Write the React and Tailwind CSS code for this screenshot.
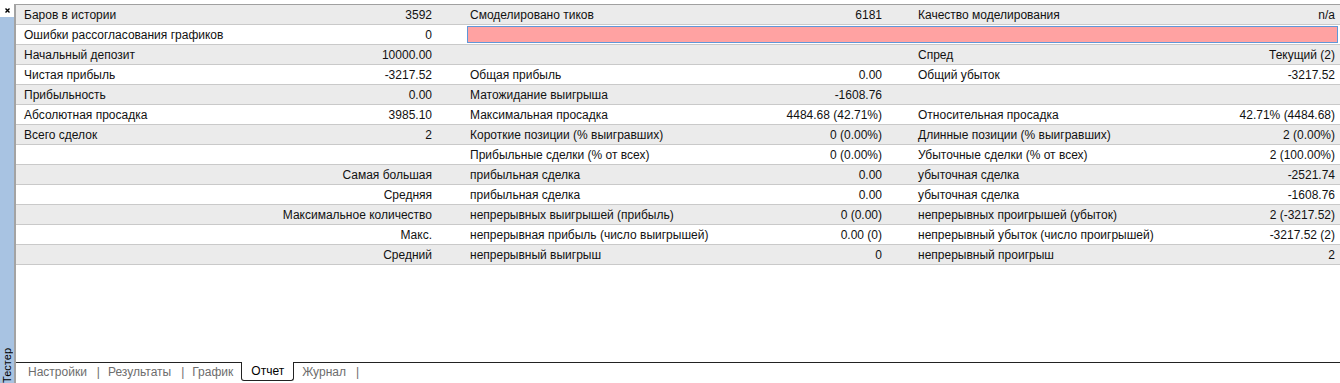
import React from 'react';

const rows = [
  { cells: ['Баров в истории', '3592', 'Смоделировано тиков', '6181', 'Качество моделирования', 'n/a'] },
  { cells: ['Ошибки рассогласования графиков', '0'], bar: true },
  { cells: ['Начальный депозит', '10000.00', '', '', 'Спред', 'Текущий (2)'] },
  { cells: ['Чистая прибыль', '-3217.52', 'Общая прибыль', '0.00', 'Общий убыток', '-3217.52'] },
  { cells: ['Прибыльность', '0.00', 'Матожидание выигрыша', '-1608.76', '', ''] },
  { cells: ['Абсолютная просадка', '3985.10', 'Максимальная просадка', '4484.68 (42.71%)', 'Относительная просадка', '42.71% (4484.68)'] },
  { cells: ['Всего сделок', '2', 'Короткие позиции (% выигравших)', '0 (0.00%)', 'Длинные позиции (% выигравших)', '2 (0.00%)'] },
  { cells: ['', '', 'Прибыльные сделки (% от всех)', '0 (0.00%)', 'Убыточные сделки (% от всех)', '2 (100.00%)'] },
  { merged: 'Самая большая', cells: ['прибыльная сделка', '0.00', 'убыточная сделка', '-2521.74'] },
  { merged: 'Средняя', cells: ['прибыльная сделка', '0.00', 'убыточная сделка', '-1608.76'] },
  { merged: 'Максимальное количество', cells: ['непрерывных выигрышей (прибыль)', '0 (0.00)', 'непрерывных проигрышей (убыток)', '2 (-3217.52)'] },
  { merged: 'Макс.', cells: ['непрерывная прибыль (число выигрышей)', '0.00 (0)', 'непрерывный убыток (число проигрышей)', '-3217.52 (2)'] },
  { merged: 'Средний', cells: ['непрерывный выигрыш', '0', 'непрерывный проигрыш', '2'] },
];

const tabs = ['Настройки', 'Результаты', 'График', 'Отчет', 'Журнал'];

function Row({ row, index }) {
  const bg = index % 2 === 0 ? 'bg-[#ebebeb]' : 'bg-white';
  const c = row.cells;
  return (
    <div className={`grid h-5 grid-cols-[224px_200px_260px_190px_280px_1fr] items-center border-b border-[#c9c9c9] ${bg}`}>
      {row.merged ? (
        <div className="col-span-2 whitespace-nowrap pr-2 text-right">{row.merged}</div>
      ) : (
        <>
          <div className="whitespace-nowrap pl-2">{c[0]}</div>
          <div className="whitespace-nowrap pr-2 text-right">{c[1]}</div>
        </>
      )}
      {row.bar ? (
        <div className="col-span-4 ml-[27px] mr-[2px] h-[17px] border border-[#5f97d8] bg-[#ffa2a2]" />
      ) : (
        <>
          <div className="whitespace-nowrap pl-[30px]">{row.merged ? c[0] : c[2]}</div>
          <div className="whitespace-nowrap pr-2 text-right">{row.merged ? c[1] : c[3]}</div>
          <div className="whitespace-nowrap pl-[28px]">{row.merged ? c[2] : c[4]}</div>
          <div className="whitespace-nowrap pr-[5px] text-right">{row.merged ? c[3] : c[5]}</div>
        </>
      )}
    </div>
  );
}

export default function App() {
  return (
    <div className="flex h-[383px] w-[1340px] overflow-hidden bg-white text-[12px] leading-none text-[#111] [font-family:'Liberation_Sans',Arial,sans-serif]">
      {/* боковая панель Тестер */}
      <div className="flex w-[14px] flex-col">
        <div className="flex h-[17px] items-start justify-center pt-[8px] pl-[1px] bg-white">
          <svg width="5" height="5" viewBox="0 0 5 5">
            <path d="M0.5 0.5 L4.5 4.5 M4.5 0.5 L0.5 4.5" stroke="#000" strokeWidth="1.4" />
          </svg>
        </div>
        <div className="flex flex-1 items-end justify-center bg-[#a8c3e2]">
          <span className="rotate-180 text-[11px] text-black [writing-mode:vertical-rl]">Тестер</span>
        </div>
      </div>
      <div className="mt-[4px] w-[2px] bg-[#a3a3a3]" />

      <div className="flex flex-1 flex-col">
        <div className="mt-[4px] border-t border-[#a0a0a0]">
          {rows.map((row, i) => (
            <Row key={i} row={row} index={i} />
          ))}
        </div>
        <div className="flex-1" />

        {/* вкладки */}
        <div className="flex h-[21px] items-start border-t border-[#222] pl-[12px] text-[#6d6d6d]">
          {tabs.map((t) =>
            t === 'Отчет' ? (
              <div key={t} className="-mt-px mr-[8px] flex h-[19px] items-center rounded-b-[3px] border border-t-0 border-[#222] bg-white px-[9px] text-black">
                {t}
              </div>
            ) : (
              <div key={t} className="flex h-[18px] items-center">
                <span>{t}</span>
                {t !== 'График' && <span className="ml-[10px] mr-[8px]">|</span>}
                {t === 'График' && <span className="w-[8px]" />}
              </div>
            )
          )}
        </div>
      </div>
    </div>
  );
}
